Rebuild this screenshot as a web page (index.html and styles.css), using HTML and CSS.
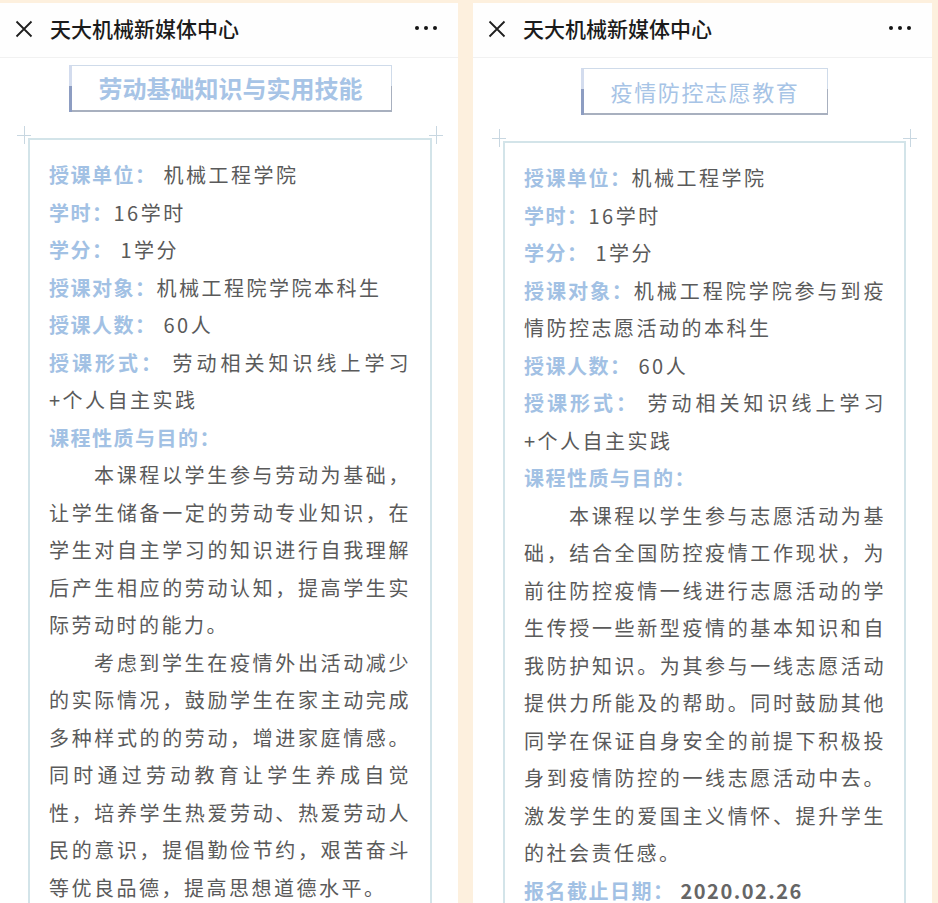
FILE: index.html
```html
<!DOCTYPE html>
<html lang="zh-CN">
<head>
    <meta charset="UTF-8">
    <meta name="viewport" content="width=device-width, initial-scale=1.0">
    <title>天大机械新媒体中心</title>
    <link rel="stylesheet" href="styles.css">
</head>
<body>

<div class="screens">

    <!-- Left screen: 劳动基础知识与实用技能 -->
    <section class="phone phone-left">
        <header class="topbar">
            <svg class="close-icon" viewBox="0 0 18 18" width="18" height="18">
                <path d="M1.5 1.5 L16.5 16.5 M16.5 1.5 L1.5 16.5" stroke="#1f1f1f" stroke-width="1.8" fill="none"/>
            </svg>
            <div class="topbar-title">天大机械新媒体中心</div>
            <div class="more"><span></span><span></span><span></span></div>
        </header>

        <div class="article">
            <div class="course-title">
                <div class="course-title-box bold">劳动基础知识与实用技能</div>
            </div>

            <div class="info-frame">
                <div class="info-text">
                    <p><span class="label">授课单位：</span> 机械工程学院</p>
                    <p><span class="label">学时：</span>16学时</p>
                    <p><span class="label">学分：</span> 1学分</p>
                    <p><span class="label">授课对象：</span>机械工程院学院本科生</p>
                    <p><span class="label">授课人数：</span> 60人</p>
                    <p class="fill"><span class="label">授课形式：</span> 劳动相关知识线上学习</p>
                    <p>+个人自主实践</p>
                    <p><span class="label">课程性质与目的：</span></p>
                    <p class="indent">本课程以学生参与劳动为基础，让学生储备一定的劳动专业知识，在学生对自主学习的知识进行自我理解后产生相应的劳动认知，提高学生实际劳动时的能力。</p>
                    <p class="indent">考虑到学生在疫情外出活动减少的实际情况，鼓励学生在家主动完成多种样式的的劳动，增进家庭情感。同时通过劳动教育让学生养成自觉性，培养学生热爱劳动、热爱劳动人民的意识，提倡勤俭节约，艰苦奋斗等优良品德，提高思想道德水平。</p>
                </div>
            </div>
        </div>
    </section>

    <!-- Right screen: 疫情防控志愿教育 -->
    <section class="phone phone-right">
        <header class="topbar">
            <svg class="close-icon" viewBox="0 0 18 18" width="18" height="18">
                <path d="M1.5 1.5 L16.5 16.5 M16.5 1.5 L1.5 16.5" stroke="#1f1f1f" stroke-width="1.8" fill="none"/>
            </svg>
            <div class="topbar-title">天大机械新媒体中心</div>
            <div class="more"><span></span><span></span><span></span></div>
        </header>

        <div class="article">
            <div class="course-title">
                <div class="course-title-box">疫情防控志愿教育</div>
            </div>

            <div class="info-frame">
                <div class="info-text">
                    <p><span class="label">授课单位：</span>机械工程学院</p>
                    <p><span class="label">学时：</span>16学时</p>
                    <p><span class="label">学分：</span> 1学分</p>
                    <p><span class="label">授课对象：</span>机械工程院学院参与到疫情防控志愿活动的本科生</p>
                    <p><span class="label">授课人数：</span> 60人</p>
                    <p class="fill"><span class="label">授课形式：</span> 劳动相关知识线上学习</p>
                    <p>+个人自主实践</p>
                    <p><span class="label">课程性质与目的：</span></p>
                    <p class="indent">本课程以学生参与志愿活动为基础，结合全国防控疫情工作现状，为前往防控疫情一线进行志愿活动的学生传授一些新型疫情的基本知识和自我防护知识。为其参与一线志愿活动提供力所能及的帮助。同时鼓励其他同学在保证自身安全的前提下积极投身到疫情防控的一线志愿活动中去。激发学生的爱国主义情怀、提升学生的社会责任感。</p>
                    <p><span class="label">报名截止日期：</span><span class="date">2020.02.26</span></p>
                </div>
            </div>
        </div>
    </section>

</div>

</body>
</html>
```

FILE: styles.css
```css
body {
    margin: 0;
    height: 903px;
    overflow: hidden;
    background: #fdf0de;
    font-family: "Noto Sans CJK SC", "Noto Sans", sans-serif;
}

.screens {
    display: flex;
    gap: 15px;
    padding-top: 3px;
}

/* one phone screenshot */
.phone {
    height: 900px;
    background: #ffffff;
    overflow: hidden;
}

.phone-left {
    width: 458px;
}

.phone-right {
    width: 459px;
}

/* top bar */
.topbar {
    box-sizing: border-box;
    height: 55px;
    display: flex;
    align-items: center;
    padding: 0 21px 0 15px;
    border-bottom: 1px solid #f1f1f1;
    background: #fefefe;
}

.close-icon {
    flex-shrink: 0;
    margin-right: 17px;
    margin-top: -3px;
}

.topbar-title {
    flex: 1;
    font-size: 21px;
    font-weight: 500;
    color: #1b1b1b;
    margin-top: -4px;
}

.more {
    display: flex;
    gap: 5px;
    margin-top: -4px;
}

.more span {
    width: 4px;
    height: 4px;
    border-radius: 50%;
    background: #141414;
}

/* article body */
.article {
    padding: 0 26px 0 28px;
}

.phone-right .article {
    padding-left: 30px;
}

.course-title {
    text-align: center;
    margin-top: 7px;
}

.phone-right .course-title {
    margin-top: 10px;
}

.course-title-box {
    position: relative;
    display: inline-block;
    height: 44px;
    line-height: 44px;
    padding: 0 28px 0 27px;
    border: 1px solid #cfdbea;
    border-left: 3px solid #d3dcee;
    border-bottom: 2px solid #a8b0bf;
    font-size: 22px;
    letter-spacing: 1.6px;
    color: #a7c4e6;
}

.course-title-box.bold {
    font-size: 24px;
    font-weight: 700;
    letter-spacing: 0;
}

/* darker lower half of the side borders */
.course-title-box::before {
    content: "";
    position: absolute;
    left: -3px;
    bottom: -2px;
    width: 3px;
    height: 26px;
    background: #8d9dc2;
}

.course-title-box::after {
    content: "";
    position: absolute;
    right: -1px;
    bottom: -2px;
    width: 1px;
    height: 26px;
    background: #a8b0bf;
}

/* framed info block */
.info-frame {
    position: relative;
    margin-top: 26px;
    height: 900px;
    padding: 16px 0 0 19px;
    border: 2px solid #d3e4e9;
    border-bottom: none;
}

.info-frame::before,
.info-frame::after {
    content: "";
    position: absolute;
    top: -14px;
    width: 14px;
    height: 18px;
    background:
        linear-gradient(#c8d7e1, #c8d7e1) center / 100% 1px no-repeat,
        linear-gradient(#c8d7e1, #c8d7e1) center / 1px 100% no-repeat;
}

.info-frame::before {
    left: -13px;
}

.info-frame::after {
    right: -13px;
}

.info-text {
    width: 362px;
    font-size: 20px;
    line-height: 37.5px;
    letter-spacing: 2.5px;
    color: #5a5a5a;
    text-align: justify;
}

.info-text p {
    margin: 0;
}

.info-text .fill {
    text-align-last: justify;
}

.info-text .indent {
    text-indent: 45px;
}

.label {
    font-weight: 700;
    color: #a2c1e4;
    letter-spacing: 1.5px;
}

.date {
    margin-left: 6px;
    font-weight: 700;
    color: #666666;
    letter-spacing: 1.5px;
}
```
